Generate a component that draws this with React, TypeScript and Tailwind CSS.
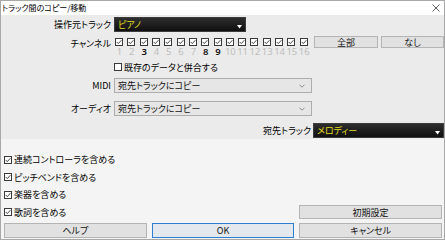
import React from "react";

const FONT =
  "font-['Noto_Sans_CJK_JP','Noto_Sans',sans-serif] [font-feature-settings:'palt']";

function Check({ checked = true }: { checked?: boolean }) {
  return (
    <div className="w-[8px] h-[8px] border border-[#3a3a3a] bg-white flex items-center justify-center shrink-0">
      {checked && (
        <svg width="6" height="6" viewBox="0 0 6 6">
          <path d="M0.6 2.9 L2.3 4.6 L5.4 1.2" fill="none" stroke="#333" strokeWidth="0.9" />
        </svg>
      )}
    </div>
  );
}

function DarkCombo({ text, w }: { text: string; w: string }) {
  return (
    <div
      className={`${w} h-[15px] bg-gradient-to-b from-[#2e2e2e] to-[#101010] border border-[#3c3c3c] relative flex items-center pl-[3px] text-[#e3dd1e] text-[9px] leading-none`}
    >
      {text}
      <svg className="absolute right-[3px] bottom-[2px]" width="5" height="4" viewBox="0 0 5 4">
        <path d="M0 0 L5 0 L2.5 3.5 Z" fill="#ffffff" />
      </svg>
    </div>
  );
}

function GrayCombo({ text }: { text: string }) {
  return (
    <div className="w-[198px] h-[15px] bg-[#e6e6e6] border border-[#adadad] flex items-center pl-[3px] pr-[6px] text-[9px] leading-none text-[#111]">
      <span className="flex-1">{text}</span>
      <svg width="6" height="4" viewBox="0 0 6 4">
        <path d="M0.5 0.8 L3 3.2 L5.5 0.8" fill="none" stroke="#777" strokeWidth="0.8" />
      </svg>
    </div>
  );
}

function Btn({ children, cls = "", blue = false }: { children: React.ReactNode; cls?: string; blue?: boolean }) {
  return (
    <div
      className={`${cls} flex items-center justify-center text-[9px] leading-none text-[#111] border ${
        blue ? "border-[#2f7fd0] bg-[#e3e8ee]" : "border-[#b4b4b4] bg-[#e1e1e1]"
      }`}
    >
      {children}
    </div>
  );
}

export default function App() {
  const active = [3, 8, 9];
  return (
    <div className={`w-[445px] h-[240px] flex flex-col border border-[#a8a8a8] bg-[#f4f4f4] overflow-hidden text-black ${FONT}`}>
      {/* Title bar */}
      <div className="h-[14px] bg-white flex items-center justify-between pl-[1px] pr-[4px] text-[8px] leading-none shrink-0">
        <span>トラック間のコピー/移動</span>
        <svg width="8" height="8" viewBox="0 0 8 8">
          <path d="M0.5 0.5 L7.5 7.5 M7.5 0.5 L0.5 7.5" stroke="#333" strokeWidth="0.8" />
        </svg>
      </div>

      {/* Upper panel */}
      <div className="h-[124px] bg-[#ebebeb] flex flex-col pt-[2px] shrink-0">
        {/* Source track */}
        <div className="flex items-center h-[15px]">
          <div className="w-[110px] text-right text-[9px] leading-none">操作元トラック</div>
          <div className="ml-[3px]">
            <DarkCombo text="ピアノ" w="w-[132px]" />
          </div>
        </div>

        {/* Channels */}
        <div className="flex mt-[4px] h-[22px]">
          <div className="w-[110px] text-right text-[9px] leading-none pt-[3px]">チャンネル</div>
          <div className="ml-[3px] w-[197px] grid grid-cols-16">
            {Array.from({ length: 16 }, (_, i) => i + 1).map((n) => (
              <div key={n} className="flex flex-col items-start">
                <div className="mt-[2px] ml-[1px]">
                  <Check />
                </div>
                <div
                  className={`w-[11px] text-center text-[9.5px] leading-[11px] font-['Noto_Sans',sans-serif] ${
                    active.includes(n) ? "text-[#111] font-semibold" : "text-[#bdbdbd]"
                  }`}
                >
                  {n}
                </div>
              </div>
            ))}
          </div>
          <div className="ml-[3px] flex gap-[3px] h-[12px]">
            <Btn cls="w-[64px] h-[12px]">全部</Btn>
            <Btn cls="w-[63px] h-[12px]">なし</Btn>
          </div>
        </div>

        {/* Merge */}
        <div className="flex items-center mt-[5px] h-[8px] pl-[113px]">
          <Check checked={false} />
          <span className="ml-[2px] text-[9px] leading-none">既存のデータと併合する</span>
        </div>

        {/* MIDI */}
        <div className="flex items-center mt-[7px] h-[15px]">
          <div className="w-[110px] text-right text-[9px] leading-none">MIDI</div>
          <div className="ml-[3px]">
            <GrayCombo text="宛先トラックにコピー" />
          </div>
        </div>

        {/* Audio */}
        <div className="flex items-center mt-[8px] h-[15px]">
          <div className="w-[110px] text-right text-[9px] leading-none">オーディオ</div>
          <div className="ml-[3px]">
            <GrayCombo text="宛先トラックにコピー" />
          </div>
        </div>

        {/* Destination */}
        <div className="flex items-center justify-end mt-[7px] h-[15px]">
          <div className="text-[9px] leading-none mr-[2px]">宛先トラック</div>
          <DarkCombo text="メロディー" w="w-[131px]" />
        </div>
      </div>

      {/* Lower panel */}
      <div className="flex-1 flex flex-col pt-[12px] pl-[3px] pr-[2px]">
        <div className="flex items-center h-[17.5px]">
          <Check />
          <span className="ml-[2px] text-[9px] leading-none">連続コントローラを含める</span>
        </div>
        <div className="flex items-center h-[17.5px]">
          <Check />
          <span className="ml-[2px] text-[9px] leading-none">ピッチベンドを含める</span>
        </div>
        <div className="flex items-center h-[17.5px]">
          <Check />
          <span className="ml-[2px] text-[9px] leading-none">楽器を含める</span>
        </div>
        <div className="flex items-center h-[17.5px]">
          <Check />
          <span className="ml-[2px] text-[9px] leading-none">歌詞を含める</span>
          <Btn cls="ml-auto w-[143px] h-[14px]">初期設定</Btn>
        </div>
        <div className="grid grid-cols-3 gap-[5px] mt-[2px]">
          <Btn cls="h-[15px]">ヘルプ</Btn>
          <Btn cls="h-[15px]" blue>
            OK
          </Btn>
          <Btn cls="h-[15px]">キャンセル</Btn>
        </div>
      </div>
    </div>
  );
}
